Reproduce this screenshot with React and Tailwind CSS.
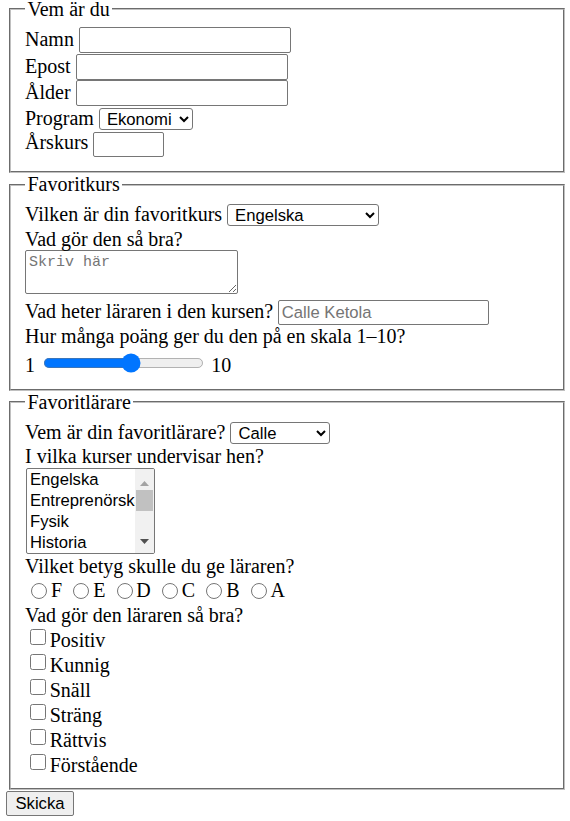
import React from 'react'

const control = "font-['Liberation_Sans',Arial,sans-serif] text-[16.67px] text-black bg-white border border-[#767676]"

function TextInput({ className = '', placeholder }) {
  return (
    <input
      type="text"
      placeholder={placeholder}
      className={`${control} rounded-[2px] px-[2.5px] align-top placeholder:text-[#757575] ${className}`}
    />
  )
}

function Select({ className = '', value, options }) {
  return (
    <select defaultValue={value} className={`${control} h-[22px] rounded-[3px] pl-[3px] align-top ${className}`}>
      {options.map((o) => (
        <option key={o}>{o}</option>
      ))}
    </select>
  )
}

function Group({ legend, children }) {
  return (
    <fieldset className="block w-[556px] ml-[9px] min-w-0 border-2 [border-style:groove] border-[#c0c0c0] px-[14px] pt-[6px] pb-[12.5px] leading-[25px]">
      <legend className="px-[2.5px] leading-[23px]">{legend}</legend>
      {children}
    </fieldset>
  )
}

function Listbox() {
  const courses = ['Engelska', 'Entreprenörskap', 'Fysik', 'Historia', 'Kemi', 'Matematik']
  return (
    <div className="flex w-[129px] h-[86px] mt-[1px] ml-[1px] border border-[#767676] rounded-[2px] overflow-hidden bg-white font-['Liberation_Sans',Arial,sans-serif] text-[16.67px]">
      <div className="flex-1 min-w-0 overflow-hidden">
        {courses.map((c) => (
          <div key={c} className="h-[21px] leading-[21px] pl-[3px] whitespace-nowrap">{c}</div>
        ))}
      </div>
      <div className="w-[19px] bg-[#f1f1f1] flex flex-col items-center">
        <div className="h-[21px] flex justify-center pt-[12px]">
          <svg width="9" height="5" viewBox="0 0 9 5"><path d="M4.5 0L9 5H0z" fill="#a3a3a3" /></svg>
        </div>
        <div className="w-[17px] h-[21px] bg-[#c1c1c1]" />
        <div className="flex-1" />
        <div className="h-[21px] flex justify-center pt-[7px]">
          <svg width="9" height="5" viewBox="0 0 9 5"><path d="M0 0H9L4.5 5z" fill="#505050" /></svg>
        </div>
      </div>
    </div>
  )
}

export default function App() {
  const grades = ['F', 'E', 'D', 'C', 'B', 'A']
  const traits = ['Positiv', 'Kunnig', 'Snäll', 'Sträng', 'Rättvis', 'Förstående']
  const courses = ['Engelska', 'Entreprenörskap', 'Fysik', 'Historia', 'Kemi', 'Matematik', 'Programmering']

  return (
    <div className="w-[570px] min-h-[821px] overflow-hidden bg-white text-black font-['Liberation_Serif','Times_New_Roman',serif] text-[20px] leading-[23px]">
      <form className="-mt-[2.25px]">
        <Group legend="Vem är du">
          <div className="h-[27px]">Namn <TextInput className="w-[212px] h-[26px]" /></div>
          <div className="h-[26px]">Epost <TextInput className="w-[212px] h-[26px]" /></div>
          <div className="h-[26px]">Ålder <TextInput className="w-[212px] h-[26px]" /></div>
          <div className="h-[24.25px]">Program <Select className="w-[94px] mt-[2.25px]" value="Ekonomi" options={['Ekonomi', 'Teknik', 'Naturvetenskap', 'Samhälle']} /></div>
          <div className="h-[28.5px]">Årskurs <TextInput className="w-[71px] h-[25px] mt-[1.75px]" /></div>
        </Group>

        <Group legend="Favoritkurs">
          <div className="h-[24.75px]">Vilken är din favoritkurs <Select className="w-[152px] mt-[2.25px]" value="Engelska" options={courses} /></div>
          <div className="h-[23px]">Vad gör den så bra?</div>
          <textarea
            placeholder="Skriv här"
            className="block w-[213px] h-[44px] mt-[0.5px] mb-[5.2px] border border-[#767676] rounded-[2px] px-[3px] py-[2px] bg-white font-['Liberation_Mono',monospace] text-[15px] leading-[19px] resize placeholder:text-[#757575]"
          />
          <div className="h-[25px]">Vad heter läraren i den kursen? <TextInput className="w-[211px] h-[25px] mt-[1px]" placeholder="Calle Ketola" /></div>
          <div className="h-[23px]">Hur många poäng ger du den på en skala 1–10?</div>
          <div className="h-[29px] pt-[5.3px]">
            1 <input type="range" min="1" max="10" className="w-[129px] h-[16px] mx-[2px] [zoom:1.25] align-top" /> 10
          </div>
        </Group>

        <Group legend="Favoritlärare">
          <div className="h-[24.5px]">Vem är din favoritlärare? <Select className="w-[100px] mt-[2.25px]" value="Calle" options={['Calle', 'Anna', 'Erik', 'Maria']} /></div>
          <div className="h-[23px]">I vilka kurser undervisar hen?</div>
          <Listbox />
          <div className="h-[23px]">Vilket betyg skulle du ge läraren?</div>
          <div className="h-[25.3px] pt-[1px]">
            {grades.map((g) => (
              <React.Fragment key={g}>
                <label>
                  <input type="radio" name="betyg" className="w-[16px] h-[16px] mt-[5px] mr-[3.75px] ml-[6.25px] align-top" />
                  {g}
                </label>{' '}
              </React.Fragment>
            ))}
          </div>
          <div className="h-[23px]">Vad gör den läraren så bra?</div>
          {traits.map((t) => (
            <div key={t} className="h-[25px] pt-[2.7px]">
              <label>
                <input type="checkbox" className="w-[16px] h-[16px] mt-[1px] mr-[3.75px] ml-[5px] align-top" />
                {t}
              </label>
            </div>
          ))}
        </Group>

        <div className="pt-[0.75px]">
          <button
            type="button"
            className="block ml-[6px] w-[68px] h-[25px] border border-[#767676] rounded-[2px] bg-[#efefef] font-['Liberation_Sans',Arial,sans-serif] text-[16.67px] text-black"
          >
            Skicka
          </button>
        </div>
      </form>
    </div>
  )
}
